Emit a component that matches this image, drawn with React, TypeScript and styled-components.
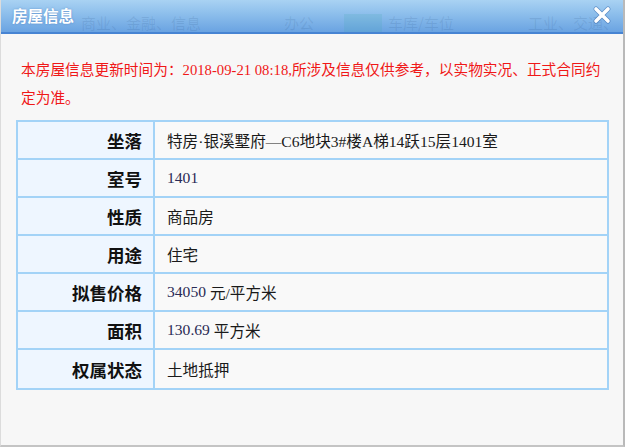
import React from "react";
import styled, { createGlobalStyle } from "styled-components";

const Global = createGlobalStyle`
  html, body { margin: 0; padding: 0; background: #ffffff; }
  body { font-family: "Liberation Serif", "Noto Sans CJK SC", serif; }
`;

const Window = styled.div`
  position: relative;
  width: 622px;
  height: 445px;
  background: #f7f7f7;
  border-left: 1px solid #dcdcdc;
  border-right: 2px solid #b9b9b9;
  border-bottom: 2px solid #c4c4c4;
  display: flex;
  flex-direction: column;
  overflow: hidden;
`;

const Header = styled.div`
  position: relative;
  height: 32px;
  flex: none;
  background: linear-gradient(to bottom, #a9d2f3 0%, #8fc0ec 40%, #6aa3e2 100%);
  border-bottom: 2px solid #4784d3;
  display: flex;
  align-items: center;
  justify-content: space-between;
  padding: 0 10px 0 11px;
`;

const Ghost = styled.div`
  position: absolute;
  left: 80px;
  top: 12px;
  display: flex;
  align-items: center;
  font-family: "Noto Sans CJK SC", sans-serif;
  font-size: 15px;
  color: rgba(30, 70, 120, 0.12);
  pointer-events: none;
  white-space: nowrap;
`;

const GhostItem = styled.span<{ $w: number }>`
  display: inline-block;
  width: ${(p) => p.$w}px;
`;

const GhostBlock = styled.span`
  display: inline-block;
  width: 38px;
  height: 18px;
  margin-right: 6px;
  background: rgba(60, 170, 170, 0.16);
`;

const Title = styled.div`
  position: relative;
  font-family: "Noto Sans CJK SC", sans-serif;
  font-weight: 700;
  font-size: 15.5px;
  color: #ffffff;
  text-shadow: 0 0 2px rgba(60, 110, 180, 0.6);
  margin-top: -2px;
`;

const Close = styled.div`
  position: relative;
  width: 22px;
  height: 22px;
  margin-top: -2px;
  display: flex;
  align-items: center;
  justify-content: center;
`;

const Content = styled.div`
  display: flex;
  flex-direction: column;
  padding: 22px 0 0 15px;
`;

const Notice = styled.p`
  margin: 0 0 8px 5px;
  width: 582px;
  font-size: 14.7px;
  line-height: 28px;
  color: #f01818;
  font-family: "Liberation Serif", "Noto Sans CJK SC", serif;
`;

const Table = styled.div`
  width: 593px;
  display: grid;
  grid-template-columns: 137px 1fr;
  border: 2px solid #a3d3f7;
  box-sizing: border-box;
`;

const Label = styled.div<{ $last?: boolean }>`
  height: 38px;
  box-sizing: border-box;
  background: #eef6ff;
  border-right: 2px solid #a3d3f7;
  border-bottom: ${(p) => (p.$last ? "none" : "2px solid #a3d3f7")};
  display: flex;
  align-items: center;
  justify-content: flex-end;
  padding-right: 11px;
  font-family: "Noto Sans CJK SC", sans-serif;
  font-weight: 700;
  font-size: 17.5px;
  color: #111;
`;

const Value = styled.div<{ $last?: boolean }>`
  height: 38px;
  box-sizing: border-box;
  background: #f9f9f9;
  border-bottom: ${(p) => (p.$last ? "none" : "2px solid #a3d3f7")};
  display: flex;
  align-items: center;
  padding-left: 12px;
  font-family: "Liberation Serif", "Noto Sans CJK SC", serif;
  font-size: 15.6px;
  color: #1a1a1a;
`;

const Num = styled.span`
  color: #2a2a55;
`;

const rows: { label: string; value: React.ReactNode }[] = [
  { label: "坐落", value: "特房·银溪墅府—C6地块3#楼A梯14跃15层1401室" },
  { label: "室号", value: <Num>1401</Num> },
  { label: "性质", value: "商品房" },
  { label: "用途", value: "住宅" },
  { label: "拟售价格", value: <><Num>34050</Num>&nbsp;元/平方米</> },
  { label: "面积", value: <><Num>130.69</Num>&nbsp;平方米</> },
  { label: "权属状态", value: "土地抵押" },
];

export default function App() {
  return (
    <>
      <Global />
      <Window>
        <Header>
          <Ghost>
            <GhostItem $w={203}>商业、金融、信息</GhostItem>
            <GhostItem $w={60}>办公</GhostItem>
            <GhostBlock />
            <GhostItem $w={140}>车库/车位</GhostItem>
            <GhostItem $w={90}>工业、交通、</GhostItem>
          </Ghost>
          <Title>房屋信息</Title>
          <Close>
            <svg width="20" height="20" viewBox="0 0 20 20">
              <path d="M4 4 L16 16 M16 4 L4 16" stroke="rgba(40,90,160,0.5)" strokeWidth="5" strokeLinecap="round" />
              <path d="M4 4 L16 16 M16 4 L4 16" stroke="#ffffff" strokeWidth="3.6" strokeLinecap="round" />
            </svg>
          </Close>
        </Header>
        <Content>
          <Notice>
            本房屋信息更新时间为：2018-09-21 08:18,所涉及信息仅供参考，以实物实况、正式合同约定为准。
          </Notice>
          <Table>
            {rows.map((r, i) => (
              <React.Fragment key={r.label}>
                <Label $last={i === rows.length - 1}>{r.label}</Label>
                <Value $last={i === rows.length - 1}>{r.value}</Value>
              </React.Fragment>
            ))}
          </Table>
        </Content>
      </Window>
    </>
  );
}
